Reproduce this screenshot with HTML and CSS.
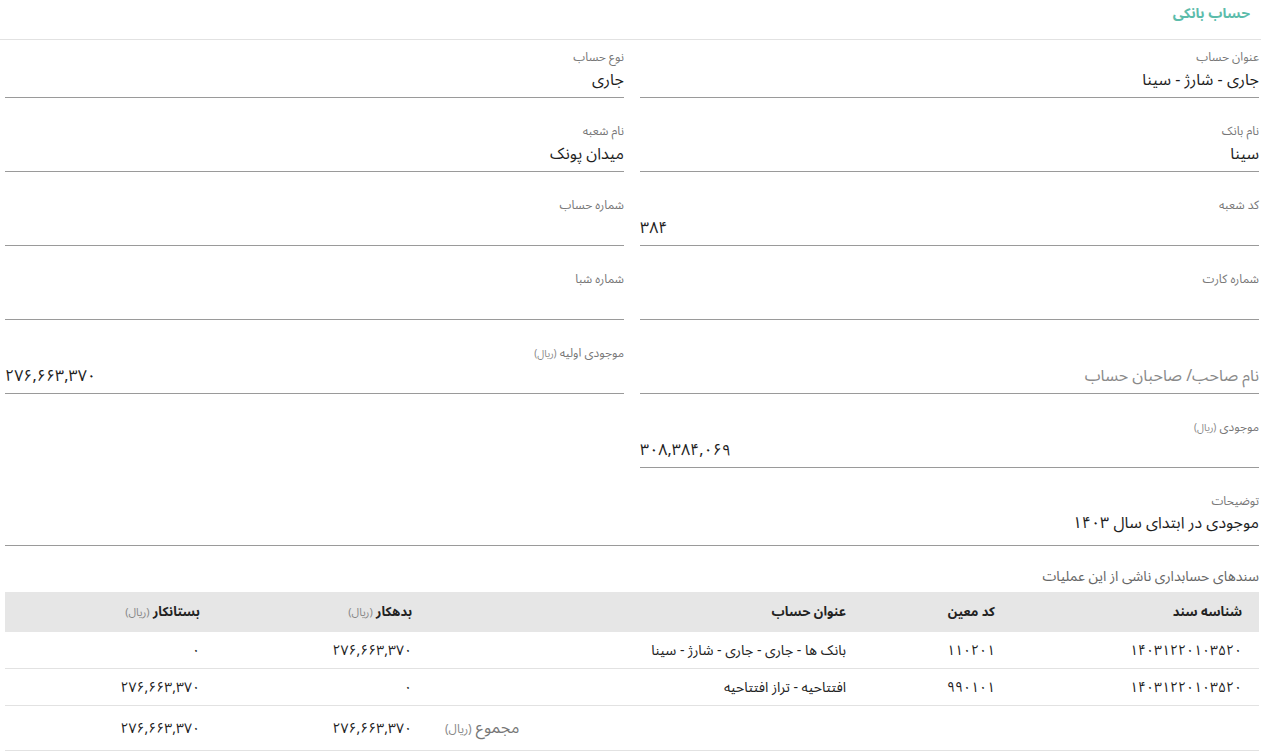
FILE: index.html
```html
<!DOCTYPE html>
<html lang="fa" dir="rtl">
<head>
    <meta charset="UTF-8">
    <meta name="viewport" content="width=device-width, initial-scale=1.0">
    <title>حساب بانکی</title>
    <link rel="stylesheet" href="styles.css">
</head>
<body>
    <div class="page">
        <div class="page-title">
            <h1>حساب بانکی</h1>
        </div>

        <div class="form-grid">
            <div class="field">
                <label>عنوان حساب</label>
                <div class="value">جاری - شارژ - سینا</div>
            </div>
            <div class="field">
                <label>نوع حساب</label>
                <div class="value">جاری</div>
            </div>

            <div class="field">
                <label>نام بانک</label>
                <div class="value">سینا</div>
            </div>
            <div class="field">
                <label>نام شعبه</label>
                <div class="value">میدان پونک</div>
            </div>

            <div class="field">
                <label>کد شعبه</label>
                <div class="value num">۳۸۴</div>
            </div>
            <div class="field">
                <label>شماره حساب</label>
                <div class="value"></div>
            </div>

            <div class="field">
                <label>شماره کارت</label>
                <div class="value"></div>
            </div>
            <div class="field">
                <label>شماره شبا</label>
                <div class="value"></div>
            </div>

            <div class="field">
                <label></label>
                <div class="value placeholder">نام صاحب/ صاحبان حساب</div>
            </div>
            <div class="field">
                <label>موجودی اولیه <span class="unit">(ریال)</span></label>
                <div class="value num">۲۷۶,۶۶۳,۳۷۰</div>
            </div>

            <div class="field">
                <label>موجودی <span class="unit">(ریال)</span></label>
                <div class="value num">۳۰۸,۳۸۴,۰۶۹</div>
            </div>
            <div></div>

            <div class="field wide textarea">
                <label>توضیحات</label>
                <div class="value">موجودی در ابتدای سال ۱۴۰۳</div>
            </div>
        </div>

        <div class="docs">
            <div class="docs-caption">سندهای حسابداری ناشی از این عملیات</div>
            <table class="docs-table">
                <thead>
                    <tr>
                        <th class="c-id">شناسه سند</th>
                        <th class="c-code">کد معین</th>
                        <th class="c-title">عنوان حساب</th>
                        <th class="c-amt">بدهکار <span class="unit">(ریال)</span></th>
                        <th class="c-amt">بستانکار <span class="unit">(ریال)</span></th>
                    </tr>
                </thead>
                <tbody>
                    <tr>
                        <td>۱۴۰۳۱۲۲۰۱۰۳۵۲۰</td>
                        <td>۱۱۰۲۰۱</td>
                        <td>بانک ها - جاری - جاری - شارژ - سینا</td>
                        <td>۲۷۶,۶۶۳,۳۷۰</td>
                        <td>۰</td>
                    </tr>
                    <tr>
                        <td>۱۴۰۳۱۲۲۰۱۰۳۵۲۰</td>
                        <td>۹۹۰۱۰۱</td>
                        <td>افتتاحیه - تراز افتتاحیه</td>
                        <td>۰</td>
                        <td>۲۷۶,۶۶۳,۳۷۰</td>
                    </tr>
                    <tr class="total">
                        <td></td>
                        <td></td>
                        <td class="total-label">مجموع <span class="unit">(ریال)</span></td>
                        <td>۲۷۶,۶۶۳,۳۷۰</td>
                        <td>۲۷۶,۶۶۳,۳۷۰</td>
                    </tr>
                </tbody>
            </table>
        </div>
    </div>
</body>
</html>
```

FILE: styles.css
```css
body {
    margin: 0;
    padding: 0;
    background: #fff;
    font-family: "Noto Sans Arabic", "Vazirmatn", "DejaVu Sans", sans-serif;
    color: #222;
}
.page {
    width: 1261px;
}
.page-title {
    height: 39px;
    border-bottom: 1px solid #e2e2e2;
    padding-right: 11px;
}
.page-title h1 {
    margin: 0;
    font-size: 14px;
    line-height: 28px;
    font-weight: bold;
    color: #5cbcab;
}
.form-grid {
    display: grid;
    grid-template-columns: 619px 619px;
    column-gap: 16px;
    row-gap: 16px;
    padding: 0 2px 0 5px;
}
.field {
    box-sizing: border-box;
    height: 58px;
    padding-top: 10px;
    border-bottom: 1px solid #9a9a9a;
}
.field label {
    display: block;
    height: 15px;
    font-size: 12px;
    line-height: 15px;
    color: #777;
}
.field .value {
    margin-top: 3px;
    height: 24px;
    font-size: 16px;
    line-height: 24px;
    color: #1e1e1e;
}
.field .num {
    direction: ltr;
    text-align: left;
}
.field .placeholder {
    color: #8a8a8a;
}
.unit {
    font-size: 10px;
    color: #888;
    font-weight: normal;
}
.field.wide {
    grid-column: 1 / 3;
}
.field.textarea {
    height: 62px;
}
.field.textarea .value {
    margin-top: 2px;
}
.docs {
    padding: 0 2px 0 5px;
}
.docs-caption {
    margin-top: 23px;
    height: 16px;
    font-size: 14px;
    line-height: 16px;
    color: #666;
    margin-bottom: 7px;
}
.docs-table {
    width: 1254px;
    border-collapse: collapse;
    table-layout: fixed;
    font-size: 14px;
}
.docs-table th {
    height: 40px;
    background: #e6e6e6;
    text-align: right;
    padding: 0 17px;
    font-size: 13px;
    font-weight: bold;
    color: #222;
}
.docs-table th .unit {
    font-size: 11px;
}
.docs-table td {
    height: 36px;
    padding: 0 17px;
    text-align: right;
    border-bottom: 1px solid #e2e2e2;
    color: #222;
}
.docs-table .c-id { width: 213px; }
.docs-table .c-code { width: 115px; }
.docs-table .c-title { width: 400px; }
.docs-table .c-amt { width: 178px; }
.docs-table tr.total td {
    height: 44px;
}
.docs-table .total-label {
    text-align: left;
    padding-left: 16px;
    font-size: 16px;
    color: #777;
}
.docs-table .total-label .unit {
    font-size: 12px;
}
```
